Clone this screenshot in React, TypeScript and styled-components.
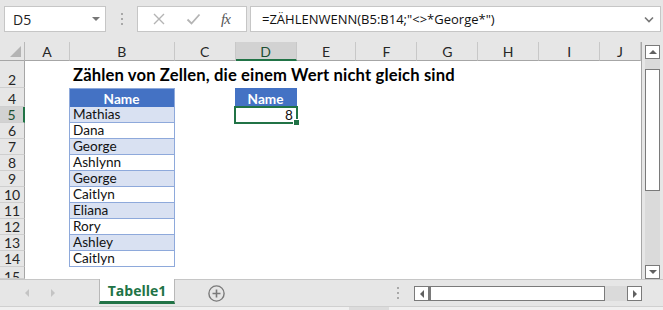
import React from "react";
import styled, { createGlobalStyle } from "styled-components";

const GlobalStyle = createGlobalStyle`
  html, body {
    margin: 0;
    padding: 0;
    background: #e6e6e6;
    overflow: hidden;
  }
`;

const GREEN = "#217346";
const CELL_FONT = `"Lato", "Liberation Sans", sans-serif`;
const UI_FONT = `"Open Sans", "Liberation Sans", sans-serif`;

const COLS = [
  { key: "A", w: 45 },
  { key: "B", w: 105 },
  { key: "C", w: 61 },
  { key: "D", w: 61 },
  { key: "E", w: 60 },
  { key: "F", w: 61 },
  { key: "G", w: 61 },
  { key: "H", w: 61 },
  { key: "I", w: 61 },
  { key: "J", w: 41 },
];

const NAMES = [
  "Mathias",
  "Dana",
  "George",
  "Ashlynn",
  "George",
  "Caitlyn",
  "Eliana",
  "Rory",
  "Ashley",
  "Caitlyn",
];

const Window = styled.div`
  width: 663px;
  height: 310px;
  display: flex;
  flex-direction: column;
  background: #e6e6e6;
  overflow: hidden;
`;

/* ---------- formula bar ---------- */

const FormulaBar = styled.div`
  height: 42px;
  display: flex;
  align-items: flex-start;
  padding: 6px 2px 0 4px;
  box-sizing: border-box;
`;

const Box = styled.div<{ $w?: number }>`
  height: 26px;
  box-sizing: border-box;
  background: #fff;
  border: 1px solid #c6c6c6;
  display: flex;
  align-items: center;
  ${(p) => (p.$w ? `width: ${p.$w}px;` : "flex: 1;")}
`;

const NameBox = styled(Box)`
  padding: 0 5px 0 8px;
  justify-content: space-between;
  font: 14px ${UI_FONT};
  color: #222;
`;

const Grip = styled.div`
  width: 31px;
  height: 26px;
  display: flex;
  flex-direction: column;
  align-items: center;
  justify-content: center;
  gap: 3px;
  span {
    width: 2px;
    height: 2px;
    background: #a8a8a8;
  }
`;

const FxBox = styled(Box)`
  justify-content: space-around;
  padding: 0 6px 0 4px;
  margin-right: 3px;
`;

const FxLabel = styled.span`
  font: italic 15px "Liberation Serif", serif;
  color: #555;
  letter-spacing: -1px;
`;

const FormulaBox = styled(Box)`
  padding: 0 6px 0 11px;
  justify-content: space-between;
  font: 13px ${UI_FONT};
  color: #111;
`;

/* ---------- sheet ---------- */

const SheetArea = styled.div`
  display: flex;
  height: 237px;
`;

const Grid = styled.div`
  width: 642px;
  background: #fff;
  border-right: 1px solid #a6a6a6;
  box-sizing: border-box;
  display: flex;
  flex-direction: column;
  overflow: hidden;
`;

const Row = styled.div<{ $h: number }>`
  display: flex;
  height: ${(p) => p.$h}px;
  flex-shrink: 0;
`;

const Corner = styled.div`
  width: 25px;
  height: 19px;
  background: #e6e6e6;
  border-right: 1px solid #b8b8b8;
  border-bottom: 1px solid #a6a6a6;
  box-sizing: border-box;
  position: relative;
  &::after {
    content: "";
    position: absolute;
    right: 3px;
    bottom: 3px;
    border-style: solid;
    border-width: 0 0 11px 11px;
    border-color: transparent transparent #b4b4b4 transparent;
  }
`;

const ColHead = styled.div<{ $w: number; $sel?: boolean }>`
  width: ${(p) => p.$w}px;
  height: 19px;
  box-sizing: border-box;
  background: ${(p) => (p.$sel ? "#d2d2d2" : "#e6e6e6")};
  border-right: 1px solid #c8c8c8;
  border-bottom: ${(p) => (p.$sel ? `2px solid ${GREEN}` : "1px solid #a6a6a6")};
  display: flex;
  align-items: center;
  justify-content: center;
  font: 14px ${CELL_FONT};
  color: ${(p) => (p.$sel ? "#1d4f32" : "#262626")};
  padding-top: ${(p) => (p.$sel ? 1 : 0)}px;
`;

const RowHead = styled.div<{ $sel?: boolean; $clip?: boolean }>`
  width: 25px;
  box-sizing: border-box;
  flex-shrink: 0;
  overflow: hidden;
  background: ${(p) => (p.$sel ? "#d2d2d2" : "#e6e6e6")};
  border-right: ${(p) => (p.$sel ? `2px solid ${GREEN}` : "1px solid #a6a6a6")};
  border-bottom: 1px solid #cfcfcf;
  display: flex;
  align-items: ${(p) => (p.$clip ? "flex-start" : "flex-end")};
  padding-top: ${(p) => (p.$clip ? 2 : 0)}px;
  justify-content: center;
  font: 14px ${CELL_FONT};
  line-height: 15px;
  color: ${(p) => (p.$sel ? "#1d4f32" : "#262626")};
`;

type Kind = "plain" | "head" | "band" | "white";

const Cell = styled.div<{ $w: number; $kind: Kind; $right?: boolean }>`
  width: ${(p) => p.$w}px;
  flex-shrink: 0;
  box-sizing: border-box;
  position: relative;
  display: flex;
  align-items: flex-end;
  justify-content: ${(p) => (p.$right ? "flex-end" : "flex-start")};
  padding: 0 4px 0 3px;
  white-space: nowrap;
  font: 13.6px ${CELL_FONT};
  line-height: 15px;
  color: #111;
  background: ${(p) =>
    p.$kind === "head" ? "#4472c4" : p.$kind === "band" ? "#d9e1f2" : p.$kind === "white" ? "#fff" : "transparent"};
  ${(p) =>
    p.$kind === "band" || p.$kind === "white"
      ? `border: 1px solid #8ea9db; border-top: none; margin-left: -1px; width: ${p.$w + 1}px;`
      : ""}
  ${(p) =>
    p.$kind === "head"
      ? `justify-content: center; color: #fff; font-weight: 700; border: 1px solid #8ea9db; border-bottom: none; margin-left: -1px; width: ${p.$w + 1}px;`
      : ""}
`;

const Title = styled.span`
  font: 700 16.6px ${CELL_FONT};
  letter-spacing: 0.15px;
  color: #000;
  padding-bottom: 3px;
  position: relative;
  z-index: 1;
`;

const Selection = styled.div`
  position: absolute;
  left: -2px;
  top: -1px;
  right: -1px;
  bottom: -1px;
  border: 2px solid ${GREEN};
  pointer-events: none;
  &::after {
    content: "";
    position: absolute;
    right: -4px;
    bottom: -4px;
    width: 5px;
    height: 5px;
    background: ${GREEN};
    border: 1px solid #fff;
  }
`;

/* ---------- scroll bars ---------- */

const VScroll = styled.div`
  width: 21px;
  display: flex;
  flex-direction: column;
  align-items: center;
  padding: 3px 3px 0 3px;
  box-sizing: border-box;
`;

const ScrollBtn = styled.div`
  width: 15px;
  height: 14px;
  flex-shrink: 0;
  box-sizing: border-box;
  background: #fff;
  border: 1px solid #7a7a7a;
  display: flex;
  align-items: center;
  justify-content: center;
`;

const VTrack = styled.div`
  flex: 1;
  width: 15px;
  background: #dadada;
  padding-top: 10px;
  box-sizing: border-box;
`;

const VThumb = styled.div`
  height: 122px;
  background: #fff;
  border: 1px solid #7a7a7a;
  box-sizing: border-box;
`;

const BottomBar = styled.div`
  height: 27px;
  display: flex;
  align-items: flex-start;
  border-top: 1px solid #c6c6c6;
  box-sizing: border-box;
`;

const NavArrows = styled.div`
  width: 99px;
  height: 26px;
  display: flex;
  align-items: center;
  gap: 22px;
  padding-left: 25px;
  box-sizing: border-box;
`;

const SheetTab = styled.div`
  width: 76px;
  height: 25px;
  margin-top: -1px;
  box-sizing: border-box;
  background: #fff;
  border-left: 1px solid #b8b8b8;
  border-right: 1px solid #b8b8b8;
  border-bottom: 3px solid ${GREEN};
  display: flex;
  align-items: center;
  justify-content: center;
  font: 700 14px ${UI_FONT};
  color: ${GREEN};
`;

const AddSheet = styled.div`
  width: 84px;
  height: 26px;
  display: flex;
  align-items: center;
  padding-left: 33px;
  box-sizing: border-box;
`;

const HGrip = styled(Grip)`
  width: 18px;
  margin-left: auto;
  height: 26px;
  margin-right: 7px;
`;

const HScroll = styled.div`
  display: flex;
  margin-top: 6px;
  margin-right: 21px;
  height: 15px;
`;

const HThumb = styled.div`
  width: 176px;
  background: #fff;
  border: 1px solid #7a7a7a;
  border-left-width: 2px;
  box-sizing: border-box;
`;

const HTrack = styled.div`
  width: 22px;
  background: #dadada;
`;

const HBtn = styled(ScrollBtn)`
  height: 15px;
`;

const StatusStrip = styled.div`
  flex: 1;
  background: #f0f0f0;
  border-top: 1px solid #d0d0d0;
  display: flex;
  padding-left: 349px;
  span {
    width: 40px;
    background: #dcdcdc;
  }
`;

const Tri = ({ dir, color = "#606060", size = 4 }: { dir: "up" | "down" | "left" | "right"; color?: string; size?: number }) => {
  const s = size;
  const pts =
    dir === "up"
      ? `0,${s} ${s},0 ${2 * s},${s}`
      : dir === "down"
      ? `0,0 ${2 * s},0 ${s},${s}`
      : dir === "left"
      ? `${s},0 ${s},${2 * s} 0,${s}`
      : `0,0 0,${2 * s} ${s},${s}`;
  const vertical = dir === "up" || dir === "down";
  return (
    <svg width={vertical ? 2 * s : s} height={vertical ? s : 2 * s}>
      <polygon points={pts} fill={color} />
    </svg>
  );
};

type RowDef = { n: number; h: number };

const ROWS: RowDef[] = [
  { n: 2, h: 27 },
  { n: 4, h: 19 },
  ...NAMES.map((_, i) => ({ n: 5 + i, h: 16 })),
  { n: 15, h: 12 },
];

function renderCell(rowNum: number, col: { key: string; w: number }) {
  const k = col.key;
  if (rowNum === 2 && k === "B") {
    return (
      <Cell key={k} $w={col.w} $kind="plain">
        <Title>Zählen von Zellen, die einem Wert nicht gleich sind</Title>
      </Cell>
    );
  }
  if (k === "B" && rowNum === 4) {
    return (
      <Cell key={k} $w={col.w} $kind="head">
        Name
      </Cell>
    );
  }
  if (k === "B" && rowNum >= 5 && rowNum <= 14) {
    return (
      <Cell key={k} $w={col.w} $kind={rowNum % 2 === 1 ? "band" : "white"}>
        {NAMES[rowNum - 5]}
      </Cell>
    );
  }
  if (k === "D" && rowNum === 4) {
    return (
      <Cell key={k} $w={col.w} $kind="head" style={{ borderColor: "#4472c4" }}>
        Name
      </Cell>
    );
  }
  if (k === "D" && rowNum === 5) {
    return (
      <Cell key={k} $w={col.w} $kind="plain" $right>
        8
        <Selection />
      </Cell>
    );
  }
  return <Cell key={k} $w={col.w} $kind="plain" />;
}

export default function App() {
  return (
    <Window>
      <GlobalStyle />
      <FormulaBar>
        <NameBox $w={102}>
          <span>D5</span>
          <Tri dir="down" color="#777" size={4} />
        </NameBox>
        <Grip>
          <span />
          <span />
          <span />
        </Grip>
        <FxBox $w={110}>
          <svg width="14" height="12" viewBox="0 0 14 12">
            <path d="M2 1 L12 11 M12 1 L2 11" stroke="#b4b4b4" strokeWidth="1.4" />
          </svg>
          <svg width="15" height="12" viewBox="0 0 15 12">
            <path d="M1.5 6.5 L5.5 10.5 L13.5 1.5" stroke="#b4b4b4" strokeWidth="1.8" fill="none" />
          </svg>
          <FxLabel>fx</FxLabel>
        </FxBox>
        <FormulaBox>
          <span>=ZÄHLENWENN(B5:B14;"&lt;&gt;*George*")</span>
          <svg width="10" height="7" viewBox="0 0 10 7">
            <path d="M1 1.5 L5 5.5 L9 1.5" stroke="#777" strokeWidth="1.6" fill="none" />
          </svg>
        </FormulaBox>
      </FormulaBar>

      <SheetArea>
        <Grid>
          <Row $h={19}>
            <Corner />
            {COLS.map((c) => (
              <ColHead key={c.key} $w={c.w} $sel={c.key === "D"}>
                {c.key}
              </ColHead>
            ))}
          </Row>
          {ROWS.map((r) => (
            <Row key={r.n} $h={r.h}>
              <RowHead $sel={r.n === 5} $clip={r.n === 15}>
                {r.n}
              </RowHead>
              {COLS.map((c) => renderCell(r.n, c))}
            </Row>
          ))}
        </Grid>
        <VScroll>
          <ScrollBtn>
            <Tri dir="up" color="#606060" size={4} />
          </ScrollBtn>
          <VTrack>
            <VThumb />
          </VTrack>
          <ScrollBtn>
            <Tri dir="down" color="#606060" size={4} />
          </ScrollBtn>
        </VScroll>
      </SheetArea>

      <BottomBar>
        <NavArrows>
          <Tri dir="left" color="#c4c4c4" size={4} />
          <Tri dir="right" color="#c4c4c4" size={4} />
        </NavArrows>
        <SheetTab>Tabelle1</SheetTab>
        <AddSheet>
          <svg width="17" height="17" viewBox="0 0 17 17">
            <circle cx="8.5" cy="8.5" r="7.6" stroke="#7a7a7a" strokeWidth="1.4" fill="none" />
            <path d="M8.5 4.5 V12.5 M4.5 8.5 H12.5" stroke="#7a7a7a" strokeWidth="1.6" />
          </svg>
        </AddSheet>
        <HGrip>
          <span />
          <span />
          <span />
        </HGrip>
        <HScroll>
          <HBtn>
            <Tri dir="left" color="#606060" size={4} />
          </HBtn>
          <HThumb />
          <HTrack />
          <HBtn>
            <Tri dir="right" color="#606060" size={4} />
          </HBtn>
        </HScroll>
      </BottomBar>
      <StatusStrip>
        <span />
      </StatusStrip>
    </Window>
  );
}
